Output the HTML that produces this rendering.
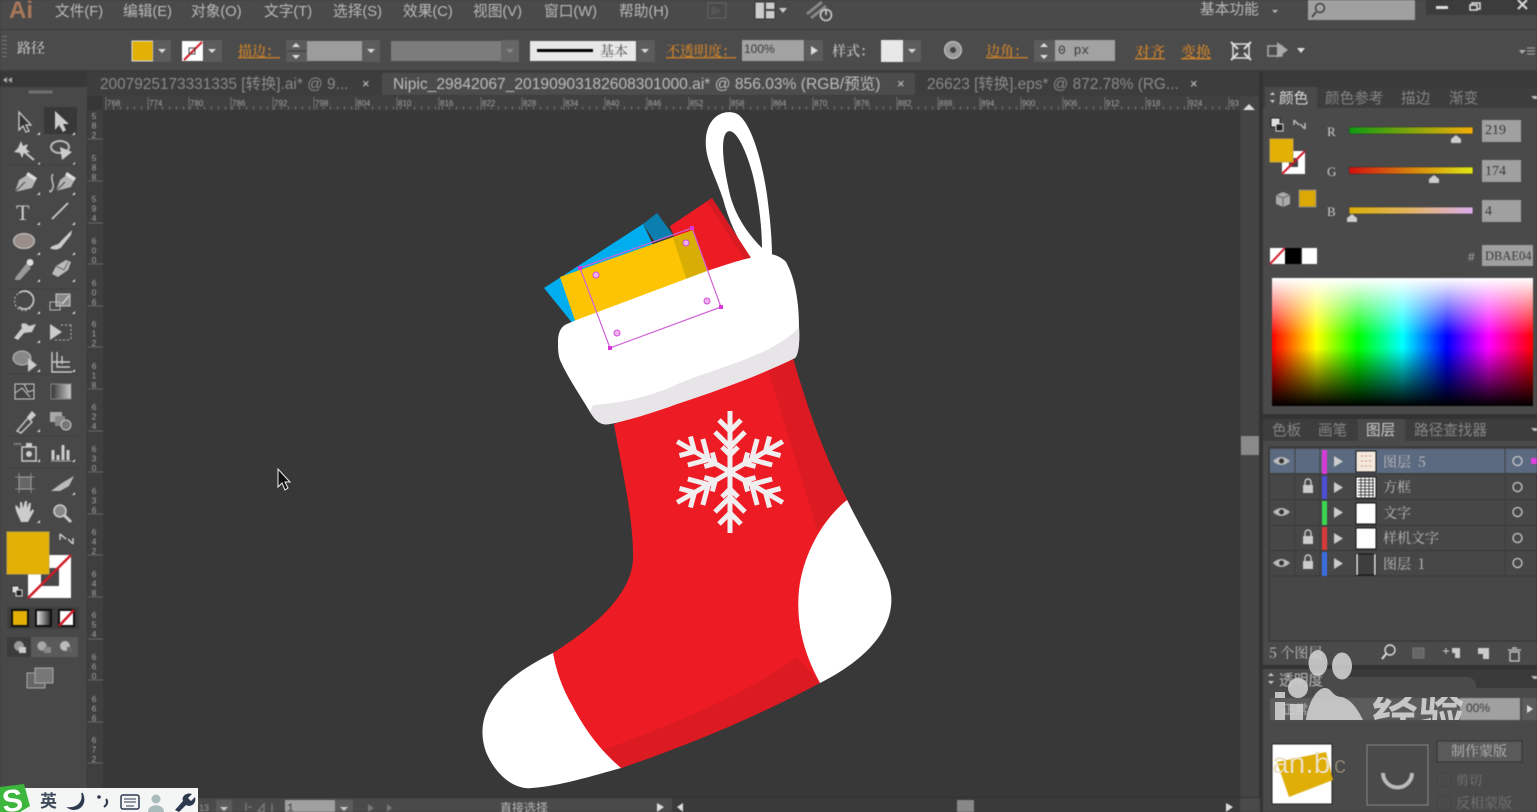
<!DOCTYPE html>
<html><head><meta charset="utf-8"><style>
html,body{margin:0;padding:0;background:#383838;width:1537px;height:812px;overflow:hidden}
svg{display:block}
text{font-family:"Liberation Sans","Noto Sans CJK SC",sans-serif}
.m{font-size:14.700px;fill:#b9b9b9}
.o{font-family:"Noto Serif CJK SC","Liberation Serif",serif;font-weight:600;font-size:14px;fill:#c8802c;text-decoration:underline dotted}
.s{font-family:"Noto Serif CJK SC","Liberation Serif",serif;font-size:14px;fill:#bdbdbd}
.r{font-size:8px;fill:#a4a4a4}
.v{font-size:8.500px;fill:#a4a4a4;writing-mode:vertical-rl;text-orientation:upright;letter-spacing:-.5px}
.t{font-size:15.400px;fill:#8a8a8a}
.p{font-size:14.600px;fill:#858585}
.i{font-family:"Liberation Mono",monospace;font-size:13px;fill:#3a3a3a}
.ui{filter:blur(.5px)}
</style></head><body>
<svg width="1537" height="812" viewBox="0 0 1537 812" xmlns="http://www.w3.org/2000/svg">
<defs>
<linearGradient id="gr" x1="0" x2="1"><stop offset="0" stop-color="#0f9a12"/><stop offset=".55" stop-color="#8ea60c"/><stop offset="1" stop-color="#f5ae08"/></linearGradient>
<linearGradient id="gg" x1="0" x2="1"><stop offset="0" stop-color="#d40f0f"/><stop offset=".5" stop-color="#d8820c"/><stop offset="1" stop-color="#e0e814"/></linearGradient>
<linearGradient id="gb" x1="0" x2="1"><stop offset="0" stop-color="#dcae06"/><stop offset=".5" stop-color="#e2b565"/><stop offset="1" stop-color="#dcaef0"/></linearGradient>
<linearGradient id="spec" x1="0" x2="1"><stop offset="0" stop-color="#f00"/><stop offset=".17" stop-color="#ff0"/><stop offset=".33" stop-color="#0f0"/><stop offset=".5" stop-color="#0ff"/><stop offset=".67" stop-color="#00f"/><stop offset=".83" stop-color="#f0f"/><stop offset="1" stop-color="#f00"/></linearGradient>
<linearGradient id="sv" x1="0" x2="0" y1="0" y2="1"><stop offset="0" stop-color="#fff"/><stop offset=".45" stop-color="#fff" stop-opacity="0"/><stop offset=".55" stop-color="#000" stop-opacity="0"/><stop offset="1" stop-color="#000"/></linearGradient>
<linearGradient id="grad" x1="0" x2="1"><stop offset="0" stop-color="#333"/><stop offset="1" stop-color="#ccc"/></linearGradient>
<linearGradient id="grad2" x1="0" x2="1"><stop offset="0" stop-color="#eee"/><stop offset="1" stop-color="#222"/></linearGradient>
<clipPath id="wm"><rect x="1270" y="697" width="194" height="23"/></clipPath>
</defs>

<!-- canvas -->
<rect width="1537" height="812" fill="#383838"/>

<!-- stocking -->
<g>
<path d="M723 199C714 172 704 158 706 137C708 118 722 109 735 113C750 118 762 160 767 195C770 218 772 238 772 256L750 258C738 240 729 222 723 199ZM727 132C720 138 723 165 730 195C736 217 748 234 762 248C762 225 758 195 752 172C746 150 735 126 727 132Z" fill="#fff" fill-rule="evenodd"/>
<path d="M670 226L712 198L751 258L700 300Z" fill="#ed1c24"/>
<path d="M707 202L712 198L751 258L745 260Z" fill="#d81b22"/>
<path d="M544 288L643 224L660 260L578 330Z" fill="#00aeef"/>
<path d="M643 224L657 213L673 235L655 242Z" fill="#0a7fb0"/>
<path d="M560 277L693 230L712 285L580 335Z" fill="#fdc404"/>
<path d="M673 238L693 230L712 285L690 290Z" fill="#d9ae04"/>
<path d="M614 424C622 470 634 520 633 560C631 590 605 620 553 653L545 700L590 768L622 768L820 683L850 505C826 460 808 410 793 360Z" fill="#ed1c24"/>
<path d="M768 370L793 358C808 410 826 460 847 500L817 530L803 483Z" fill="#db1a22"/>
<path d="M603 750C680 722 750 692 797 657L820 683C760 715 690 745 621 768Z" fill="#db1a22"/>
<path d="M847 500C862 530 880 560 888 580C894 598 892 615 882 632C868 655 842 672 820 683C802 650 796 620 799 590C803 555 822 520 847 500Z" fill="#fff"/>
<path d="M553 653C534 662 510 677 500 690C484 708 478 730 486 752C496 776 515 790 532 788C560 786 592 776 621 768C600 750 585 730 572 705C562 688 556 670 553 653Z" fill="#fff"/>
<path d="M558 342C558 331 562 326 567 324L575 320.500L707 271C725 265 740 260 750 258C762 251 778 253 786 262C796 280 799 305 799 327C800 345 798 355 795 358C760 375 720 390 680 403C655 412 630 420 610 424C600 426 595 420 590 412C580 395 568 378 560 360C558 354 558 348 558 342Z" fill="#fff"/>
<path d="M799 327C800 345 798 355 795 358C760 375 720 390 680 403C655 412 630 420 610 424C600 426 595 420 590 412L593 405C625 403 655 395 680 383C715 368 775 355 799 327Z" fill="#e8e5e8"/>
<g fill="none" stroke="#f1eef0" stroke-width="5">
<g id="arm"><path d="M730 472V411M719 420L730 431L741 420M715 432L730 447L745 432M722 447L730 455L738 447" /></g>
<use href="#arm" transform="rotate(60 730 472)"/><use href="#arm" transform="rotate(120 730 472)"/>
<use href="#arm" transform="rotate(180 730 472)"/><use href="#arm" transform="rotate(240 730 472)"/><use href="#arm" transform="rotate(300 730 472)"/>
</g>
<path d="M580 268L692 228L721 307L610 348Z" fill="none" stroke="#cf62d8" stroke-width="1.200"/>
<g fill="#d838d8"><rect x="578" y="266" width="4" height="4"/><rect x="690" y="226" width="4" height="4"/><rect x="719" y="305" width="4" height="4"/><rect x="608" y="346" width="4" height="4"/></g>
<g fill="#f0b0f0" stroke="#d050d8"><circle cx="596" cy="275" r="3"/><circle cx="686" cy="243" r="3"/><circle cx="707" cy="301" r="3"/><circle cx="617" cy="333" r="3"/></g>
</g>
<!-- cursor -->
<path d="M278 469V487L282 483L285 490L288 488L285 482L290 482Z" fill="#111" stroke="#eee" stroke-width="1"/>

<g class="ui">
<!-- menu bar -->
<rect width="1537" height="30" fill="#4a4a4a"/>
<rect y="30" width="1537" height="41" fill="#4b4b4b"/>
<rect y="29" width="1537" height="1" fill="#3c3c3c"/>
<rect y="70" width="1537" height="2" fill="#3b3b3b"/>
<text x="9" y="18" fill="#a9785a" style="font-size:24px;font-weight:700">Ai</text>
<text class="m" x="55" y="16">文件(F)</text>
<text class="m" x="123" y="16">编辑(E)</text>
<text class="m" x="191" y="16">对象(O)</text>
<text class="m" x="264" y="16">文字(T)</text>
<text class="m" x="333" y="16">选择(S)</text>
<text class="m" x="403" y="16">效果(C)</text>
<text class="m" x="473" y="16">视图(V)</text>
<text class="m" x="544" y="16">窗口(W)</text>
<text class="m" x="619" y="16">帮助(H)</text>
<rect x="708" y="3" width="18" height="15" fill="none" stroke="#666"/><text x="711" y="14" fill="#666" style="font-size:9px">Br</text>
<rect x="755" y="2" width="20" height="17" fill="#ccc" stroke="#333"/><path d="M765 2V19M765 10H775" stroke="#444" stroke-width="2"/>
<path d="M779 8H787L783 13Z" fill="#ccc"/>
<path d="M807 14L822 2M811 18L826 6" stroke="#888" stroke-width="3"/><circle cx="826" cy="15" r="5.500" fill="none" stroke="#ccc" stroke-width="1.600"/><path d="M826 9V15" stroke="#ccc" stroke-width="1.600"/>
<text class="m" x="1200" y="14">基本功能</text><path d="M1272 10H1278L1275 13Z" fill="#bbb"/>
<rect x="1308" y="0" width="107" height="20" fill="#a0a0a0"/><circle cx="1320" cy="8" r="4.500" fill="none" stroke="#333" stroke-width="1.300"/><path d="M1316 12L1312 17" stroke="#333" stroke-width="1.600"/>
<rect x="1426" y="0" width="111" height="15" fill="#3c3c3c"/>
<rect x="1436" y="6" width="12" height="3" fill="#ddd"/><rect x="1472" y="3" width="8" height="6" fill="none" stroke="#ddd" stroke-width="1.500"/><rect x="1470" y="5" width="7" height="5" fill="#3c3c3c" stroke="#ddd" stroke-width="1.500"/>
<path d="M1518 0L1527 9M1527 0L1518 9" stroke="#ddd" stroke-width="2"/>

<!-- control bar -->
<text x="17" y="53" class="s" style="font-weight:600">路径</text>
<rect x="132" y="41" width="21" height="20" fill="#e3b106" stroke="#ddd"/><rect x="153" y="40" width="18" height="22" fill="#5c5c5c"/><path d="M158 49H166L162 53Z" fill="#ddd"/>
<rect x="182" y="41" width="21" height="20" fill="#fff"/><path d="M184 60L202 42" stroke="#d01a28" stroke-width="2"/><rect x="189" y="48" width="6" height="6" fill="none" stroke="#444"/><rect x="204" y="40" width="18" height="22" fill="#5c5c5c"/><path d="M208 49H216L212 53Z" fill="#ddd"/>
<text class="o" x="238" y="56">描边：</text>
<rect x="286" y="40" width="21" height="22" fill="#5c5c5c"/><path d="M292 47L296 43L300 47ZM292 55L296 59L300 55Z" fill="#ddd"/><path d="M287 51H306" stroke="#3a3a3a"/>
<rect x="307" y="41" width="55" height="20" fill="#9c9c9c"/><rect x="362" y="40" width="18" height="22" fill="#5c5c5c"/><path d="M367 49H375L371 53Z" fill="#ddd"/>
<rect x="391" y="41" width="110" height="20" fill="#7c7c7c"/><rect x="501" y="40" width="18" height="22" fill="#666"/><path d="M506 49H514L510 53Z" fill="#888"/>
<rect x="530" y="41" width="106" height="20" fill="#e8e8e8"/><rect x="537" y="49" width="56" height="3" fill="#000"/>
<text x="600" y="56" style="font-size:14px;font-family:'Noto Serif CJK SC',serif" fill="#555">基本</text>
<rect x="637" y="40" width="18" height="22" fill="#5c5c5c"/><path d="M641 49H649L645 53Z" fill="#ddd"/>
<text class="o" x="666" y="56">不透明度：</text>
<rect x="742" y="40" width="62" height="21" fill="#a2a2a2"/><text x="744" y="53" style="font-size:12px" fill="#3a3a3a">100%</text>
<rect x="805" y="40" width="18" height="21" fill="#5c5c5c"/><path d="M811 46V55L818 50.500Z" fill="#ddd"/>
<text class="s" x="832" y="56" style="font-weight:600">样式：</text>
<rect x="881" y="40" width="22" height="22" fill="#e8e8e8"/><rect x="903" y="40" width="18" height="22" fill="#5c5c5c"/><path d="M908 49H916L912 53Z" fill="#ddd"/>
<circle cx="953" cy="50" r="8.500" fill="#999" stroke="#ccc"/><circle cx="953" cy="50" r="3" fill="#444"/>
<text class="o" x="986" y="56">边角：</text>
<rect x="1034" y="40" width="21" height="22" fill="#5c5c5c"/><path d="M1040 47L1044 43L1048 47ZM1040 55L1044 59L1048 55Z" fill="#ddd"/>
<rect x="1055" y="40" width="60" height="21" fill="#a2a2a2"/><text class="i" x="1058" y="54">0 px</text>
<text class="o" x="1135" y="57" style="font-size:15px">对齐</text><text class="o" x="1181" y="57" style="font-size:15px">变换</text>
<path d="M1233 44L1249 44L1249 58L1233 58Z" fill="none" stroke="#ddd" stroke-width="1.500"/><path d="M1231 42L1238 49M1251 42L1244 49M1231 60L1238 53M1251 60L1244 53" stroke="#ddd" stroke-width="2"/>
<path d="M1268 46H1282V56H1268Z" fill="none" stroke="#aaa" stroke-width="1.500"/><path d="M1277 42L1288 50L1277 58Z" fill="#aaa"/>
<path d="M1297 48H1305L1301 53Z" fill="#ddd"/>
<path d="M1519 50H1526L1522 54Z" fill="#aaa"/><path d="M1527 48H1535M1527 51H1535M1527 54H1535" stroke="#aaa"/>
<g fill="#777"><rect x="2" y="36" width="5" height="1"/><rect x="2" y="40" width="5" height="1"/><rect x="2" y="44" width="5" height="1"/><rect x="2" y="48" width="5" height="1"/><rect x="2" y="52" width="5" height="1"/><rect x="2" y="56" width="5" height="1"/></g>

<!-- tab bar -->
<rect x="86" y="72" width="1176" height="24" fill="#3d3d3d"/>
<rect x="382" y="73" width="533" height="22" fill="#4c4c4c"/>
<text class="t" x="100" y="89">2007925173331335 [转换].ai* @ 9...</text>
<text x="362" y="88" fill="#ccc" style="font-size:13px">×</text>
<text x="393" y="89" fill="#bdbdbd" style="font-size:15.600px">Nipic_29842067_20190903182608301000.ai* @ 856.03% (RGB/预览)</text>
<text x="897" y="88" fill="#ccc" style="font-size:13px">×</text>
<text class="t" x="927" y="89">26623 [转换].eps* @ 872.78% (RG...</text>
<text x="1190" y="88" fill="#ccc" style="font-size:13px">×</text>

<!-- ruler h -->
<rect x="88" y="96" width="1152" height="14" fill="#404040"/>
<path d="M106 97V110M148 97V110M189 97V110M231 97V110M273 97V110M314 97V110M356 97V110M397 97V110M439 97V110M481 97V110M522 97V110M564 97V110M605 97V110M647 97V110M689 97V110M730 97V110M772 97V110M813 97V110M855 97V110M897 97V110M938 97V110M980 97V110M1021 97V110M1063 97V110M1105 97V110M1146 97V110M1188 97V110M1229 97V110" stroke="#888" stroke-width=".7"/>
<path d="M113 108H1240" stroke="#777" stroke-dasharray="1 6" stroke-width="3"/>
<g class="r"><text class="r" x="107" y="106">768</text><text class="r" x="149" y="106">774</text><text class="r" x="190" y="106">780</text><text class="r" x="232" y="106">786</text><text class="r" x="274" y="106">792</text><text class="r" x="315" y="106">798</text><text class="r" x="357" y="106">804</text><text class="r" x="398" y="106">810</text><text class="r" x="440" y="106">816</text><text class="r" x="482" y="106">822</text><text class="r" x="523" y="106">828</text><text class="r" x="565" y="106">834</text><text class="r" x="606" y="106">840</text><text class="r" x="648" y="106">846</text><text class="r" x="690" y="106">852</text><text class="r" x="731" y="106">858</text><text class="r" x="773" y="106">864</text><text class="r" x="814" y="106">870</text><text class="r" x="856" y="106">876</text><text class="r" x="898" y="106">882</text><text class="r" x="939" y="106">888</text><text class="r" x="981" y="106">894</text><text class="r" x="1022" y="106">900</text><text class="r" x="1064" y="106">906</text><text class="r" x="1106" y="106">912</text><text class="r" x="1147" y="106">918</text><text class="r" x="1189" y="106">924</text><text class="r" x="1230" y="106">93</text></g>

<!-- ruler v -->
<rect x="86" y="96" width="17" height="702" fill="#363636"/>
<rect x="88" y="110" width="15" height="688" fill="#3f3f3f"/>
<path d="M88 139H103M88 181H103M88 223H103M88 264H103M88 306H103M88 347H103M88 389H103M88 431H103M88 472H103M88 514H103M88 555H103M88 597H103M88 639H103M88 680H103M88 722H103M88 763H103" stroke="#777" stroke-width=".7"/>
<g><text class="v" x="94" y="111">582</text><text class="v" x="94" y="153">588</text><text class="v" x="94" y="194">594</text><text class="v" x="94" y="236">600</text><text class="v" x="94" y="278">606</text><text class="v" x="94" y="319">612</text><text class="v" x="94" y="361">618</text><text class="v" x="94" y="402">624</text><text class="v" x="94" y="444">630</text><text class="v" x="94" y="486">636</text><text class="v" x="94" y="527">642</text><text class="v" x="94" y="569">648</text><text class="v" x="94" y="610">654</text><text class="v" x="94" y="652">660</text><text class="v" x="94" y="694">666</text><text class="v" x="94" y="735">672</text></g>

<!-- left tool panel -->
<rect x="0" y="72" width="87" height="740" fill="#484848"/>
<rect x="0" y="72" width="87" height="15" fill="#383838"/>
<path d="M7 77L3 80L7 83ZM12 77L8 80L12 83Z" fill="#aaa"/>
<path d="M29 92H53" stroke="#999" stroke-width="3" stroke-dasharray="1 1"/>
<rect x="44" y="107" width="33" height="27" fill="#383838"/>
<path d="M19 112V130L23 126L26 132L29 131L26 125H31Z" fill="#333" stroke="#ccc" stroke-width="1.300"/>
<path d="M55 111V130L59 125L63 132L66 130L63 124H69Z" fill="#ccc"/>
<path d="M21 149L34 160" stroke="#ccc" stroke-width="2"/><path d="M21 141L23 146L28 144L26 149L30 152L24 153L22 158L20 153L14 152L18 148Z" fill="#ccc"/>
<ellipse cx="60" cy="147" rx="9" ry="6" fill="none" stroke="#bbb" stroke-width="2"/><path d="M60 147L72 152L62 160Z" fill="#ccc"/>
<!-- pen -->
<path d="M15 192L19 180L29 174L36 180L32 188Z" fill="#b4b4b4"/><path d="M28 172L37 178L35 181L26 175Z" fill="#ddd"/><path d="M15 192L25 182" stroke="#444"/>
<!-- curvature pen -->
<path d="M56 191L60 180L68 174L75 179L71 187Z" fill="#b4b4b4"/><path d="M67 172L76 178L74 181L65 175Z" fill="#ddd"/><path d="M56 191L65 182" stroke="#444"/><path d="M53 174C49 180 56 184 52 190C50 193 50 192 50 190" fill="none" stroke="#bbb" stroke-width="1.600"/>
<text x="16" y="220" style="font-family:'Liberation Serif',serif;font-size:22px" fill="#ccc">T</text>
<path d="M52 219L68 203" stroke="#ccc" stroke-width="1.800"/>
<ellipse cx="24" cy="241" rx="10.500" ry="7.500" fill="#9a8f88" stroke="#ccc"/>
<path d="M50 248C54 244 58 246 61 241L72 230L71 235L63 245C60 251 52 250 50 248Z" fill="#ccc"/>
<path d="M15 278L26 264L31 268L20 280L15 280Z" fill="#999"/><circle cx="30" cy="262.500" r="3.500" fill="#ddd"/>
<path d="M52 274L56 266L66 260L71 262L68 270L58 277Z" fill="#bbb"/><path d="M56 266L64 270L68 262" fill="none" stroke="#666"/>
<path d="M19 293A9 9 0 1 1 19 307" fill="none" stroke="#ccc" stroke-width="1.600"/><circle cx="24" cy="301" r="9.500" fill="none" stroke="#ccc" stroke-dasharray="2 2"/>
<rect x="56" y="294" width="14" height="12" fill="#888" stroke="#ccc"/><rect x="50" y="302" width="10" height="8" fill="none" stroke="#bbb"/><path d="M62 304L69 296" stroke="#eee"/>
<path d="M14 338L22 328C19 322 26 322 29 326L36 324L32 332L24 333L18 340Z" fill="#ccc"/>
<path d="M50 324V340L62 332Z" fill="#ccc"/><path d="M61 325H71M71 325V340M55 340H71" stroke="#bbb" stroke-dasharray="2 2" fill="none"/>
<ellipse cx="22" cy="358" rx="9" ry="7" fill="#888" stroke="#bbb"/><path d="M28 358V372L37 365Z" fill="#ccc"/>
<path d="M52 352V372H72M57 352V367H70M62 356V364M52 362H70" stroke="#ccc" stroke-width="1.400" fill="none"/>
<rect x="15" y="384" width="19" height="15" fill="#444" stroke="#ccc"/><path d="M15 393L22 388L30 397M24 384L28 392L34 390" stroke="#ccc" fill="none"/>
<rect x="51" y="384" width="20" height="15" fill="url(#grad)" stroke="#888"/>
<path d="M17 431L28 418L32 422L21 433Z" fill="none" stroke="#ccc" stroke-width="1.400"/><path d="M27 417L32 411L36 415L31 420Z" fill="#ccc"/>
<rect x="50" y="412" width="12" height="10" fill="#aaa"/><rect x="55" y="416" width="10" height="10" fill="#888"/><circle cx="66" cy="425" r="5" fill="#777" stroke="#ccc"/>
<rect x="22" y="447" width="14" height="14" fill="none" stroke="#ccc" stroke-width="1.500"/><circle cx="29" cy="454" r="3" fill="#ccc"/><rect x="26" y="443" width="6" height="4" fill="#ccc"/><path d="M14 444H21" stroke="#aaa" stroke-dasharray="1 1" stroke-width="2"/>
<path d="M53 460V450M58 460V455M63 460V445M68 460V450" stroke="#ccc" stroke-width="3"/><path d="M51 461H71" stroke="#aaa"/>
<rect x="19" y="477" width="12" height="12" fill="#666" stroke="#ccc"/><path d="M15 477H35M15 489H35M19 473V493M31 473V493" stroke="#999" stroke-width=".8"/>
<path d="M51 491L62 483L74 476L69 486L60 491Z" fill="#bbb"/>
<path d="M17 513C15 508 15 505 16 505L20 509V502H22L23 508L25 501H27V508L29 503H31L30 512L33 509L34 511L28 522H21Z" fill="#ccc"/>
<circle cx="60" cy="511" r="6" fill="#888" stroke="#ccc" stroke-width="1.600"/><path d="M64 515L71 522" stroke="#ccc" stroke-width="3"/>
<g fill="#ddd"><path d="M37 135H40V132ZM75 132V135H72ZM40 165V162L37 165ZM75 162V165H72ZM40 195V192L37 195ZM75 192V195H72ZM40 225V222L37 225ZM75 225V222L72 225ZM40 255V252L37 255ZM75 255V252L72 255ZM40 282V279L37 282ZM75 282V279L72 282ZM40 314V311L37 314ZM75 314V311L72 314ZM40 343V340L37 343ZM40 372V369L37 372ZM75 372V369L72 372ZM40 432V429L37 432ZM40 462V459L37 462ZM75 462V459L72 462ZM75 495V492L72 495ZM40 523V520L37 523Z"/></g>
<path d="M8 165H78M8 289H78M8 374H78M8 436H78M8 468H78" stroke="#3f3f3f"/>
<!-- fill/stroke -->
<rect x="28" y="555" width="43" height="43" fill="#fff"/><rect x="41" y="568" width="18" height="18" fill="#484848"/><path d="M28 598L71 555" stroke="#d01a28" stroke-width="2.500"/>
<rect x="7" y="532" width="42" height="42" fill="#e3b106" stroke="#c7a843"/>
<path d="M60 534L66 539M60 534V540M73 544L68 539M73 544V538" stroke="#ccc" stroke-width="1.500" fill="none"/>
<rect x="12" y="586" width="7" height="7" fill="#ddd" stroke="#333"/><rect x="16" y="590" width="6" height="6" fill="#222" stroke="#ddd"/>
<rect x="7" y="607" width="72" height="22" fill="#3e3e3e"/>
<rect x="12" y="610" width="16" height="16" fill="#e3b106" stroke="#111" stroke-width="2"/>
<rect x="36" y="610" width="15" height="16" fill="url(#grad2)" stroke="#111" stroke-width="2"/>
<rect x="59" y="610" width="15" height="16" fill="#fff" stroke="#111" stroke-width="2"/><path d="M59 626L74 610" stroke="#d01a28" stroke-width="2.500"/>
<rect x="7" y="637" width="71" height="20" fill="#5a5a5a"/><rect x="7" y="637" width="24" height="20" fill="#3c3c3c"/>
<circle cx="19" cy="646" r="5" fill="#999"/><rect x="19" y="647" width="7" height="6" fill="#ccc"/>
<circle cx="42" cy="646" r="5" fill="#aaa" stroke="#666"/><rect x="44" y="647" width="7" height="6" fill="#888"/>
<circle cx="65" cy="646" r="5" fill="#bbb"/><rect x="67" y="647" width="5" height="5" fill="#666"/>
<rect x="27" y="673" width="18" height="15" fill="#666" stroke="#aaa"/><rect x="35" y="668" width="18" height="15" fill="#777" stroke="#aaa"/>

<!-- right scrollbar -->
<rect x="1240" y="96" width="20" height="702" fill="#444"/>
<path d="M1243 110L1249 104L1255 110Z" fill="#ddd"/>
<rect x="1241" y="436" width="18" height="19" fill="#8a8a8a"/>
<rect x="1259" y="72" width="4" height="740" fill="#333"/>

<!-- status bar -->
<rect x="104" y="798" width="1156" height="14" fill="#4a4a4a"/>
<rect x="104" y="797" width="1156" height="1" fill="#333"/>
<text x="199" y="811" fill="#999" style="font-size:9px">13</text>
<rect x="216" y="800" width="16" height="12" fill="#5c5c5c"/><path d="M220 807H228L224 811Z" fill="#ccc"/>
<path d="M246 803V811M252 807L248 807M258 811L264 804V812ZM272 804V812" stroke="#777" stroke-width="1.500" fill="none"/>
<rect x="285" y="800" width="50" height="12" fill="#a0a0a0"/><text class="i" x="287" y="811" style="font-size:11px">1</text>
<rect x="335" y="800" width="18" height="12" fill="#5c5c5c"/><path d="M340 807H348L344 811Z" fill="#ccc"/>
<path d="M368 804L374 808L368 812ZM387 804L392 808L387 812M393 804V812" fill="#777"/>
<text x="500" y="812" class="m" style="font-size:12px">直接选择</text>
<path d="M657 803V812L664 807Z" fill="#ddd"/>
<rect x="672" y="798" width="568" height="14" fill="#3a3a3a"/>
<path d="M683 803V812L677 807Z" fill="#ddd"/>
<rect x="957" y="800" width="17" height="12" fill="#888"/>
<path d="M1226 803V812L1233 807Z" fill="#ddd"/>

<!-- right panels -->
<rect x="1263" y="72" width="274" height="740" fill="#4a4a4a"/>
<rect x="1263" y="72" width="274" height="15" fill="#3a3a3a"/>
<rect x="1263" y="87" width="274" height="21" fill="#3d3d3d"/>
<rect x="1265" y="87" width="52" height="21" fill="#4a4a4a"/>
<path d="M1270 95L1272.500 92L1275 95ZM1270 100L1272.500 103L1275 100Z" fill="#ccc"/>
<text x="1279" y="103" style="font-size:14.600px" fill="#ddd">颜色</text>
<text class="p" x="1325" y="103">颜色参考</text><text class="p" x="1401" y="103">描边</text><text class="p" x="1449" y="103">渐变</text>
<path d="M1531 96H1537V99H1534Z" fill="#bbb"/>
<rect x="1271" y="118" width="9" height="9" fill="#ddd" stroke="#222"/><rect x="1276" y="124" width="7" height="7" fill="#222" stroke="#ddd"/>
<path d="M1294 120L1299 125M1294 120V125M1305 129L1300 124M1305 129V123" stroke="#bbb" stroke-width="1.500" fill="none"/>
<rect x="1282" y="151" width="23" height="23" fill="#fff"/><rect x="1289" y="158" width="9" height="9" fill="#444"/><path d="M1282 174L1305 151" stroke="#d01a28" stroke-width="2"/>
<rect x="1270" y="139" width="23" height="23" fill="#e3b106" stroke="#c7a843"/>
<path d="M1283 192L1290 195V204L1283 207L1276 204V195Z" fill="#aaa"/><path d="M1276 195L1283 198L1290 195M1283 198V207" stroke="#666" fill="none"/>
<rect x="1299" y="190" width="17" height="17" fill="#dba804" stroke="#888"/>
<text x="1327" y="136" style="font-size:13px;font-family:'Liberation Serif',serif" fill="#ccc">R</text><text x="1327" y="176" style="font-size:13px;font-family:'Liberation Serif',serif" fill="#ccc">G</text><text x="1327" y="216" style="font-size:13px;font-family:'Liberation Serif',serif" fill="#ccc">B</text>
<rect x="1349" y="127" width="124" height="7" fill="url(#gr)" stroke="#333" stroke-width=".6"/>
<rect x="1349" y="167" width="124" height="7" fill="url(#gg)" stroke="#333" stroke-width=".6"/>
<rect x="1349" y="207" width="124" height="7" fill="url(#gb)" stroke="#333" stroke-width=".6"/>
<path d="M1451 143V139L1456 135L1461 139V143ZM1429 183V179L1434 175L1439 179V183ZM1347 222V218L1352 214L1357 218V222Z" fill="#ccc"/>
<rect x="1482" y="120" width="39" height="22" fill="#a0a0a0"/><rect x="1482" y="160" width="39" height="22" fill="#a0a0a0"/><rect x="1482" y="200" width="39" height="22" fill="#a0a0a0"/>
<text class="i" x="1485" y="134" style="font-family:'Liberation Serif',serif;font-size:14px">219</text><text class="i" x="1485" y="175" style="font-family:'Liberation Serif',serif;font-size:14px">174</text><text class="i" x="1485" y="215" style="font-family:'Liberation Serif',serif;font-size:14px">4</text>
<rect x="1270" y="248" width="15" height="16" fill="#fff"/><path d="M1270 264L1285 248" stroke="#d01a28" stroke-width="2"/>
<rect x="1285" y="248" width="16" height="16" fill="#000"/><rect x="1302" y="248" width="15" height="16" fill="#fff"/>
<text x="1468" y="261" style="font-size:12px" fill="#aaa">#</text>
<rect x="1482" y="245" width="51" height="21" fill="#a0a0a0"/><text x="1485" y="260" style="font-family:'Liberation Serif',serif;font-size:12.500px" fill="#3a3a3a">DBAE04</text>
<rect x="1272" y="278" width="261" height="128" fill="url(#spec)"/><rect x="1272" y="278" width="261" height="128" fill="url(#sv)"/>
<rect x="1263" y="414" width="274" height="5" fill="#333"/>

<!-- layers -->
<rect x="1263" y="419" width="274" height="22" fill="#3d3d3d"/>
<rect x="1358" y="419" width="47" height="22" fill="#4a4a4a"/>
<text class="p" x="1272" y="435">色板</text><text class="p" x="1318" y="435">画笔</text><text x="1366" y="435" style="font-size:14.600px" fill="#ccc">图层</text><text class="p" x="1414" y="435">路径查找器</text>
<path d="M1531 428H1537V431H1534Z" fill="#bbb"/>
<rect x="1269" y="447" width="268" height="194" fill="#474747" stroke="#333"/>
<rect x="1270" y="449" width="267" height="24" fill="#5b6a80"/>
<path d="M1270 474H1537M1270 499.500H1537M1270 525.500H1537M1270 550.500H1537M1270 576H1537" stroke="#383838"/>
<path d="M1295 448V576M1320 448V576M1505 448V576" stroke="#3d3d3d"/>
<path d="M1273 461Q1281 453 1290 461Q1281 469 1273 461Z" fill="#bbb"/><path d="M1273 512Q1281 504 1290 512Q1281 520 1273 512Z" fill="#bbb"/><path d="M1273 563Q1281 555 1290 563Q1281 571 1273 563Z" fill="#bbb"/>
<circle cx="1281.500" cy="461" r="2.500" fill="#333"/><circle cx="1281.500" cy="512" r="2.500" fill="#333"/><circle cx="1281.500" cy="563" r="2.500" fill="#333"/>
<g fill="#ccc"><rect x="1303" y="485" width="10" height="8"/><rect x="1303" y="536" width="10" height="8"/><rect x="1303" y="561" width="10" height="8"/></g>
<path d="M1305 485V482A3 3 0 0 1 1311 482V485M1305 536V533A3 3 0 0 1 1311 533V536M1305 561V558A3 3 0 0 1 1311 558V561" fill="none" stroke="#ccc" stroke-width="1.400"/>
<rect x="1322" y="450" width="5" height="24" fill="#d83ad8"/><rect x="1322" y="476" width="5" height="23" fill="#4a4ed8"/><rect x="1322" y="501" width="5" height="24" fill="#3ad850"/><rect x="1322" y="527" width="5" height="23" fill="#d83a3a"/><rect x="1322" y="552" width="5" height="24" fill="#3a6ee0"/>
<path d="M1334 456V467L1343 461.500ZM1334 482V493L1343 487.500ZM1334 507V518L1343 512.500ZM1334 533V544L1343 538.500ZM1334 558V569L1343 563.500Z" fill="#ccc"/>
<rect x="1356" y="451" width="20" height="21" fill="#f4e8dc" stroke="#111"/><path d="M1361 456H1372M1361 461H1372M1361 466H1372" stroke="#c88" stroke-dasharray="2 2"/>
<rect x="1356" y="477" width="20" height="21" fill="#fff" stroke="#111"/><path d="M1358 480H1374M1358 483H1374M1358 486H1374M1358 489H1374M1358 492H1374M1358 495H1374M1361 478V497M1365 478V497M1369 478V497M1373 478V497" stroke="#444"/>
<rect x="1356" y="503" width="20" height="21" fill="#fff" stroke="#111"/>
<rect x="1356" y="528" width="20" height="21" fill="#fff" stroke="#111"/>
<rect x="1356" y="554" width="20" height="21" fill="#3e3e3e" stroke="#111"/><path d="M1357 554V575M1375 554V575" stroke="#eee" stroke-width="1.500"/>
<text class="s" x="1383" y="467">图层<tspan x="1418">5</tspan></text><text class="s" x="1383" y="492">方框</text><text class="s" x="1383" y="518">文字</text><text class="s" x="1383" y="543">样机文字</text><text class="s" x="1383" y="569">图层<tspan x="1418">1</tspan></text>
<g fill="none" stroke="#ccc" stroke-width="1.300"><circle cx="1517.500" cy="461" r="4.500"/><circle cx="1517.500" cy="487" r="4.500"/><circle cx="1517.500" cy="512" r="4.500"/><circle cx="1517.500" cy="538" r="4.500"/><circle cx="1517.500" cy="563" r="4.500"/></g>
<rect x="1531" y="458" width="6" height="6" fill="#e040e0"/>
<text x="1269" y="658" class="s" style="font-size:14px">5 个图层</text>
<circle cx="1390" cy="650" r="5" fill="none" stroke="#ddd" stroke-width="1.400"/><path d="M1386 654L1382 659" stroke="#ddd" stroke-width="2"/>
<rect x="1413" y="648" width="11" height="10" fill="#666" stroke="#777"/>
<path d="M1443 651H1449M1446 648V654" stroke="#ccc"/><path d="M1452 648H1460V658H1455V653H1452Z" fill="#ccc"/>
<path d="M1478 648H1489V659H1483V654H1478Z" fill="#ccc"/>
<path d="M1508 650H1521M1510 652H1519V661H1510ZM1512 648H1517" stroke="#ccc" stroke-width="1.300" fill="none"/>
<rect x="1263" y="665" width="274" height="4" fill="#333"/>
<rect x="1345" y="669" width="192" height="19" fill="#3a3a3a"/>
<path d="M1268 676L1271 673L1274 676ZM1268 681L1271 684L1274 681Z" fill="#ccc"/>
<text x="1279" y="685" class="m">透明度</text>
<path d="M1531 676H1537V679H1534Z" fill="#bbb"/>
<rect x="1270" y="698" width="190" height="22" fill="#5c5c5c"/>
<text x="1282" y="714" class="m" style="font-size:13px">正常</text>
<rect x="1460" y="698" width="60" height="22" fill="#a0a0a0"/>
<text x="1466" y="712" style="font-size:12px" fill="#3a3a3a">00%</text>
<rect x="1522" y="698" width="15" height="22" fill="#5c5c5c"/><path d="M1527 705V713L1533 709Z" fill="#ddd"/>
<rect x="1272" y="744" width="60" height="60" fill="#fff" stroke="#222"/>
<path d="M1277 762L1326 752L1333 780L1289 797Z" fill="#dfae07"/>
<rect x="1367" y="745" width="61" height="60" fill="none" stroke="#888"/>
<path d="M1383 773A14 14 0 0 0 1412 773" stroke="#bbb" stroke-width="4" fill="none"/>
<rect x="1437" y="741" width="85" height="21" fill="#5a5a5a" stroke="#333"/>
<text x="1451" y="756" class="s">制作蒙版</text>
<rect x="1437" y="773" width="14" height="13" fill="none" stroke="#444"/><text x="1456" y="785" class="s" style="font-size:13px;fill:#777">剪切</text>
<rect x="1437" y="796" width="14" height="14" fill="none" stroke="#444"/><text x="1456" y="808" class="s" style="font-size:14px;fill:#777">反相蒙版</text>
</g>

<!-- watermark -->
<rect x="1328" y="677" width="148" height="20" rx="9" fill="#4a4a4a"/>
<g fill="#d2d2d2" fill-opacity=".88">
<ellipse cx="1318" cy="663" rx="9.500" ry="13"/><ellipse cx="1342" cy="666" rx="10" ry="13.500"/><ellipse cx="1298" cy="688" rx="10" ry="10"/>
<path d="M1306 720C1308 704 1316 688 1325 688C1332 688 1332 697 1342 697C1352 700 1358 710 1363 720Z"/>
<rect x="1275" y="692" width="10" height="6"/><rect x="1275" y="702" width="10" height="18"/><rect x="1290" y="704" width="13" height="16"/>
<g clip-path="url(#wm)"><text x="1372" y="728" style="font-size:46px;font-weight:700" fill="#d6d6d6">经验</text></g>
</g>
<text x="1272" y="773" style="font-size:30px" fill="#ece0c8" fill-opacity=".9">an.b</text>
<text x="1334" y="773" style="font-size:24px" fill="#a89880" fill-opacity=".6">c</text>

<!-- IME bar -->
<rect x="0" y="788" width="198" height="24" fill="#f4f5f5"/>
<path d="M0 787L24 784L30 806L20 812H0Z" fill="#3cb63c"/>
<text x="2" y="811" transform="rotate(-6 14 800)" style="font-size:31px;font-weight:700" fill="#fff">S</text>
<text x="40" y="807" style="font-size:17px;font-weight:700" fill="#3c4a5c">英</text>
<path d="M82 793C84 802 78 808 69 808C76 812 88 806 82 793Z" fill="#2d3a4e" stroke="#2d3a4e" stroke-width="1.500"/>
<circle cx="99" cy="797" r="1.800" fill="#2d3a4e"/><path d="M106 799Q109 803 104 807" stroke="#2d3a4e" stroke-width="2" fill="none"/>
<rect x="121" y="795" width="18" height="14" rx="2" fill="none" stroke="#2d3a4e" stroke-width="1.500"/><path d="M124 799H136M124 802H136M126 806H134" stroke="#2d3a4e"/>
<circle cx="156" cy="799" r="4.500" fill="#a9bcbc"/><path d="M148 812C148 803 164 803 164 812Z" fill="#a9bcbc"/>
<path d="M175 810L183 801C181 796 187 792 192 794L188 798L191 801L195 797C197 803 191 808 186 805L179 812Z" fill="#2d3a4e"/>
</svg>
</body></html>
